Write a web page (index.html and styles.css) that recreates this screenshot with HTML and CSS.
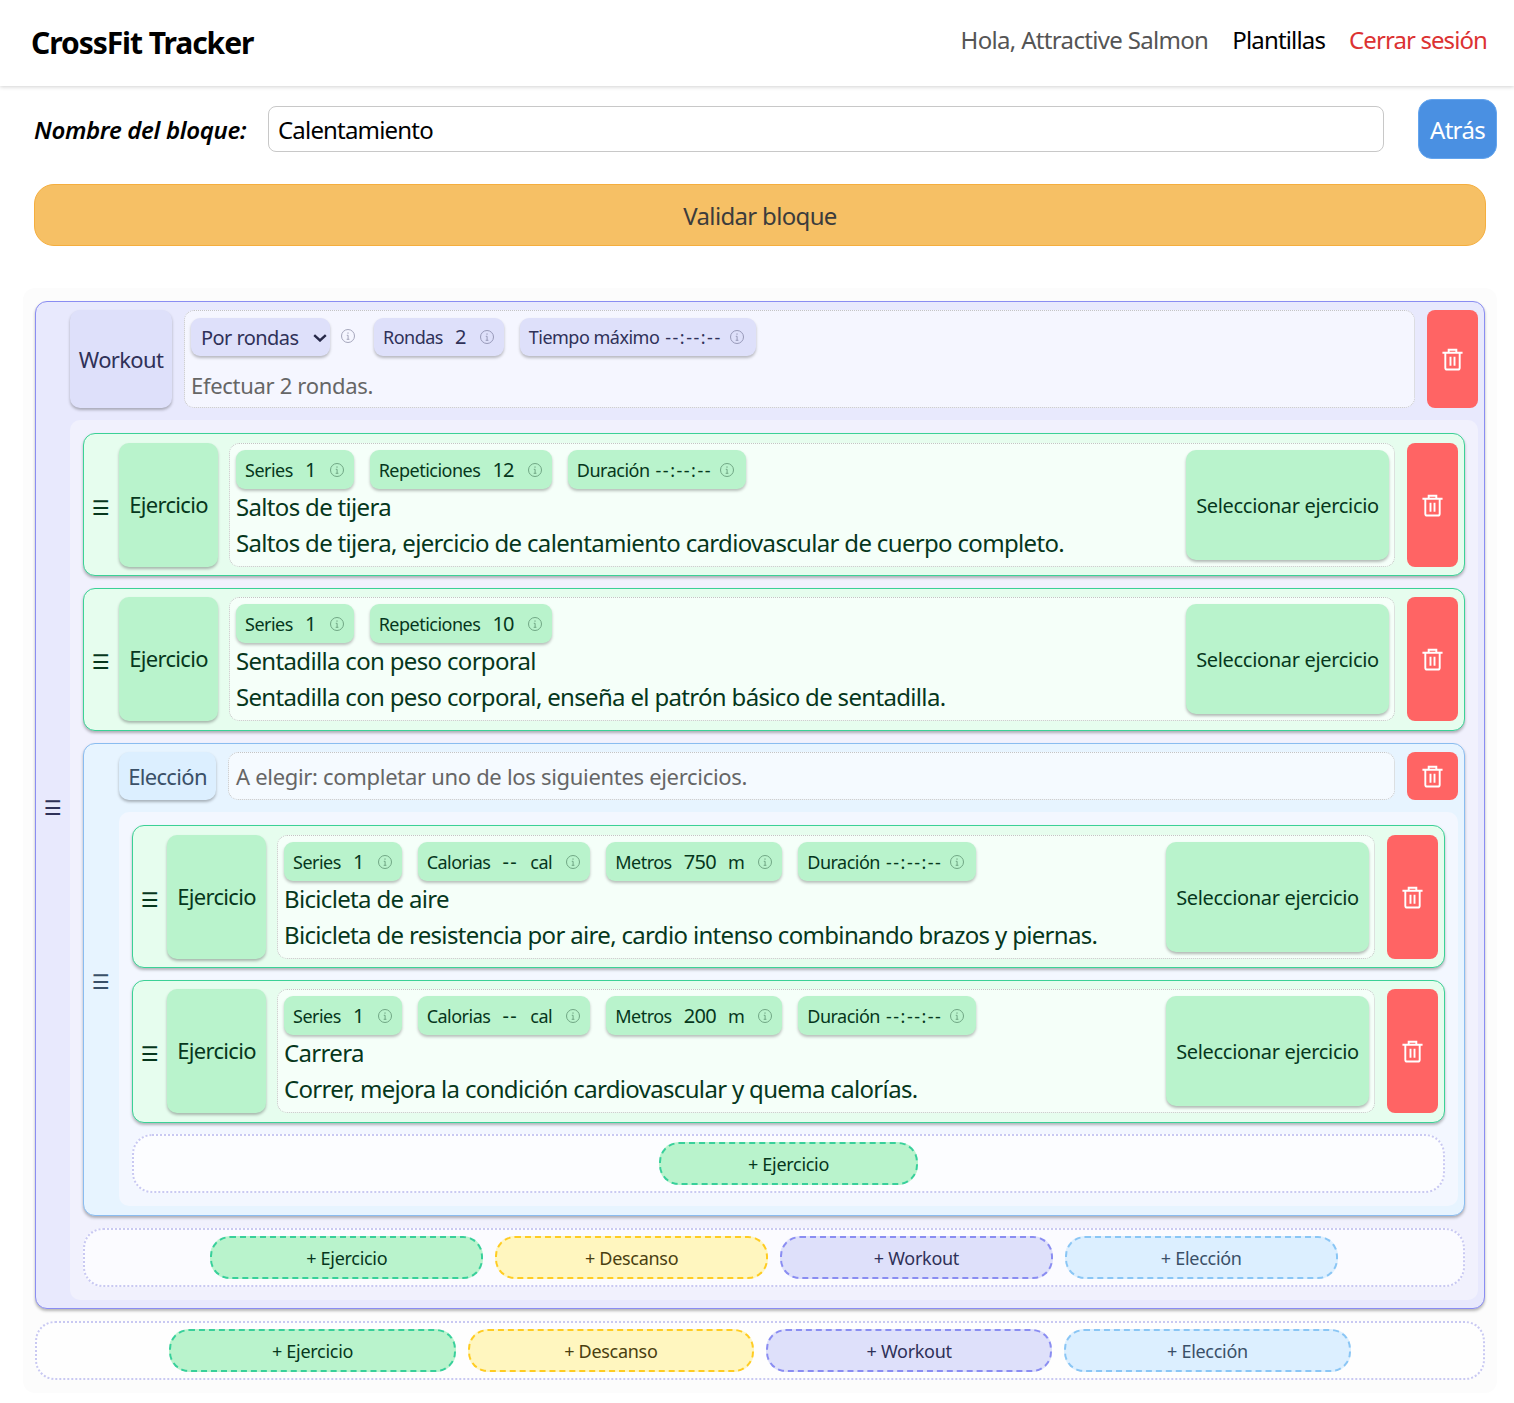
FILE: index.html
```html
<!DOCTYPE html>
<html lang="es">
<head>
<meta charset="utf-8">
<title>CrossFit Tracker</title>
<link rel="stylesheet" href="styles.css">
</head>
<body>
<svg class="defs" width="0" height="0" aria-hidden="true">
  <symbol id="trash" viewBox="0 0 24 24"><path d="M1.500 5h21M8 4.500V1.800h8v2.700M4.500 5v15.500a2 2 0 0 0 2 2h11a2 2 0 0 0 2-2V5M9.900 9v9.500M14.100 9v9.500" fill="none" stroke="currentColor" stroke-width="2"/></symbol>
  <symbol id="info" viewBox="0 0 14 14"><circle cx="7" cy="7" r="6.500" fill="none" stroke="currentColor" stroke-width="1"/><path d="M5.800 6.300h1.300v4M5.700 10.300h2.700M7 3.400v1.400" fill="none" stroke="currentColor" stroke-width="1"/></symbol>
</svg>
<header class="topbar">
  <div class="brand">CrossFit Tracker</div>
  <nav class="nav">
    <span class="nav-user">Hola, Attractive Salmon</span>
    <span class="nav-link">Plantillas</span>
    <span class="nav-out">Cerrar sesión</span>
  </nav>
</header>
<main class="main">
  <div class="name-row">
    <label class="name-label" for="name">Nombre del bloque:</label>
    <input class="name-input" id="name" value="Calentamiento">
    <button class="back">Atrás</button>
  </div>
  <button class="validate">Validar bloque</button>
  <section class="canvas">
    <div class="block workout">
      <div class="handle">☰</div>
      <div class="body">
        <div class="head wk-head">
          <div class="tag">Workout</div>
          <div class="info wk-info">
            <div class="chips">
              <div class="chip mode"><span>Por rondas</span><svg class="chev" viewBox="0 0 14 8"><path d="M1.200 1.200 7 6.500l5.800-5.300" fill="none" stroke="currentColor" stroke-width="2.400"/></svg></div>
              <svg class="i i-mode"><use href="#info"/></svg>
              <div class="chip c-rondas"><span>Rondas</span><b>2</b><svg class="i"><use href="#info"/></svg></div>
              <div class="chip tight"><span>Tiempo máximo</span><b class="time">--:--:--</b><svg class="i"><use href="#info"/></svg></div>
            </div>
            <div class="desc muted wk-desc">Efectuar 2 rondas.</div>
          </div>
          <button class="del"><svg class="trash"><use href="#trash"/></svg></button>
        </div>
        <div class="kids wk-kids">
          <div class="block ex">
            <div class="handle">☰</div>
            <div class="tag">Ejercicio</div>
            <div class="info ex-info">
              <div class="ex-main">
                <div class="chips">
                  <div class="chip"><span>Series</span><b>1</b><svg class="i"><use href="#info"/></svg></div>
                  <div class="chip"><span>Repeticiones</span><b>12</b><svg class="i"><use href="#info"/></svg></div>
                  <div class="chip tight"><span>Duración</span><b class="time">--:--:--</b><svg class="i"><use href="#info"/></svg></div>
                </div>
                <div class="desc">Saltos de tijera</div>
                <div class="desc">Saltos de tijera, ejercicio de calentamiento cardiovascular de cuerpo completo.</div>
              </div>
              <button class="pick">Seleccionar ejercicio</button>
            </div>
            <button class="del"><svg class="trash"><use href="#trash"/></svg></button>
          </div>
          <div class="block ex">
            <div class="handle">☰</div>
            <div class="tag">Ejercicio</div>
            <div class="info ex-info">
              <div class="ex-main">
                <div class="chips">
                  <div class="chip"><span>Series</span><b>1</b><svg class="i"><use href="#info"/></svg></div>
                  <div class="chip"><span>Repeticiones</span><b>10</b><svg class="i"><use href="#info"/></svg></div>
                </div>
                <div class="desc">Sentadilla con peso corporal</div>
                <div class="desc">Sentadilla con peso corporal, enseña el patrón básico de sentadilla.</div>
              </div>
              <button class="pick">Seleccionar ejercicio</button>
            </div>
            <button class="del"><svg class="trash"><use href="#trash"/></svg></button>
          </div>
          <div class="block choice">
            <div class="handle">☰</div>
            <div class="body">
              <div class="head ch-head">
                <div class="tag">Elección</div>
                <div class="info ch-info"><div class="desc muted">A elegir: completar uno de los siguientes ejercicios.</div></div>
                <button class="del"><svg class="trash"><use href="#trash"/></svg></button>
              </div>
              <div class="kids ch-kids">
                <div class="block ex">
                  <div class="handle">☰</div>
                  <div class="tag">Ejercicio</div>
                  <div class="info ex-info">
                    <div class="ex-main">
                      <div class="chips">
                        <div class="chip"><span>Series</span><b>1</b><svg class="i"><use href="#info"/></svg></div>
                        <div class="chip"><span>Calorias</span><b class="dash">--</b><span>cal</span><svg class="i"><use href="#info"/></svg></div>
                        <div class="chip"><span>Metros</span><b>750</b><span>m</span><svg class="i"><use href="#info"/></svg></div>
                        <div class="chip tight"><span>Duración</span><b class="time">--:--:--</b><svg class="i"><use href="#info"/></svg></div>
                      </div>
                      <div class="desc">Bicicleta de aire</div>
                      <div class="desc">Bicicleta de resistencia por aire, cardio intenso combinando brazos y piernas.</div>
                    </div>
                    <button class="pick">Seleccionar ejercicio</button>
                  </div>
                  <button class="del"><svg class="trash"><use href="#trash"/></svg></button>
                </div>
                <div class="block ex">
                  <div class="handle">☰</div>
                  <div class="tag">Ejercicio</div>
                  <div class="info ex-info">
                    <div class="ex-main">
                      <div class="chips">
                        <div class="chip"><span>Series</span><b>1</b><svg class="i"><use href="#info"/></svg></div>
                        <div class="chip"><span>Calorias</span><b class="dash">--</b><span>cal</span><svg class="i"><use href="#info"/></svg></div>
                        <div class="chip"><span>Metros</span><b>200</b><span>m</span><svg class="i"><use href="#info"/></svg></div>
                        <div class="chip tight"><span>Duración</span><b class="time">--:--:--</b><svg class="i"><use href="#info"/></svg></div>
                      </div>
                      <div class="desc">Carrera</div>
                      <div class="desc">Correr, mejora la condición cardiovascular y quema calorías.</div>
                    </div>
                    <button class="pick">Seleccionar ejercicio</button>
                  </div>
                  <button class="del"><svg class="trash"><use href="#trash"/></svg></button>
                </div>
                <div class="zone"><button class="add a-ex">+ Ejercicio</button></div>
              </div>
            </div>
          </div>
          <div class="zone">
            <button class="add a-ex">+ Ejercicio</button>
            <button class="add a-rest">+ Descanso</button>
            <button class="add a-wk">+ Workout</button>
            <button class="add a-ch">+ Elección</button>
          </div>
        </div>
      </div>
    </div>
    <div class="zone">
      <button class="add a-ex">+ Ejercicio</button>
      <button class="add a-rest">+ Descanso</button>
      <button class="add a-wk">+ Workout</button>
      <button class="add a-ch">+ Elección</button>
    </div>
  </section>
</main>
</body>
</html>
```
FILE: styles.css
```css
* { box-sizing: border-box; }
html, body { margin: 0; padding: 0; }
body {
  background: #fff;
  color: #000;
  font-family: "Noto Sans", "Open Sans", sans-serif;
  font-size: 24px;
  letter-spacing: -0.028em;
}
button, input { font: inherit; letter-spacing: inherit; }
.defs { display: block; height: 0; }

.topbar {
  height: 86px;
  display: flex;
  align-items: center;
  justify-content: space-between;
  padding: 0 27px 0 31px;
  box-shadow: 0 1px 4px rgba(0,0,0,.18);
}
.brand { font-size: 30px; font-weight: 700; letter-spacing: -0.035em; padding-bottom: 2px; }
.nav { display: flex; gap: 24px; padding-bottom: 8px; }
.nav-user { color: #555; }
.nav-link { letter-spacing: -0.035em; }
.nav-out { color: #dc3232; letter-spacing: -0.038em; }

.main { padding: 13px 17px 10px 23px; }
.name-row { display: flex; align-items: center; padding-left: 11px; }
.name-label { width: 234px; font-style: italic; font-weight: 600; letter-spacing: -0.014em; }
.name-input {
  width: 1116px;
  height: 46px;
  padding: 0 9px;
  border: 1px solid #c8c8c8;
  border-radius: 8px;
  background: #fff;
  color: #000;
  letter-spacing: -0.034em;
}
.back {
  margin-left: 34px;
  width: 79px;
  height: 60px;
  padding: 0;
  color: #fff;
  background: #4a90e2;
  border: 1px solid #64a5ee;
  border-radius: 14px;
}
.validate {
  display: block;
  width: 1452px;
  height: 62px;
  margin: 25px 0 0 11px;
  background: #f6c065;
  border: 1px solid #f5ae3e;
  border-radius: 20px;
  color: #3c3c3c;
}

.canvas {
  margin-top: 42px;
  padding: 13px 12px 13px;
  background: #fcfcfc;
  border-radius: 12px;
  display: flex;
  flex-direction: column;
  gap: 12px;
}
.block {
  display: flex;
  border: 1px solid;
  border-radius: 12px;
  box-shadow: 0 2px 3px rgba(0,0,0,.28);
}
.body { flex: 1; min-width: 0; display: flex; flex-direction: column; gap: 12px; }
.handle {
  flex: 0 0 35px;
  align-self: center;
  margin-top: 6px;
  padding-right: 1px;
  text-align: center;
  font-family: "DejaVu Sans", sans-serif;
  font-size: 20px;
  font-weight: 700;
  line-height: 1;
  letter-spacing: 0;
}
.workout > .handle { flex-basis: 34px; padding-right: 0; }
.head { display: flex; gap: 12px; }
.tag {
  flex: none;
  display: flex;
  align-items: center;
  justify-content: center;
  font-size: 22px;
  border-radius: 10px;
  box-shadow: 0 2px 3px rgba(0,0,0,.28);
}
.info {
  flex: 1;
  min-width: 0;
  border: 1px dotted #c4c4c4;
  border-radius: 10px;
}
.chips { display: flex; align-items: center; gap: 16px; }
.chip {
  height: 39px;
  display: flex;
  align-items: center;
  gap: 12px;
  padding: 0 10px 0 9px;
  font-size: 18px;
  letter-spacing: -0.028em;
  border-radius: 9px;
  box-shadow: 0 2px 3px rgba(0,0,0,.25);
  white-space: nowrap;
}
.chip b { font-weight: 400; font-size: 20px; letter-spacing: -0.035em; }
.chip .dash { letter-spacing: 1.5px; }
.chip .time { font-size: 18px; letter-spacing: 1.5px; }
.chip .i { margin-left: 2px; }
.chip.tight { gap: 6px; padding-right: 12px; }
.i { flex: none; width: 14px; height: 14px; opacity: .4; }
.desc { height: 36px; line-height: 36px; white-space: nowrap; }
.muted { color: #666; font-size: 22px; letter-spacing: -0.014em; }
.del {
  flex: none;
  width: 51px;
  padding: 0;
  display: flex;
  align-items: center;
  justify-content: center;
  color: #fff;
  background: #ff6464;
  border: 0;
  border-radius: 8px;
}
.trash { width: 23px; height: 23px; }
.kids { display: flex; flex-direction: column; gap: 12px; border-radius: 10px; }

.workout {
  background: #e8e9fd;
  border-color: #8a8df2;
  padding: 8px 6px 8px 0;
  color: #2f3158;
}
.wk-head { height: 98px; }
.workout > .body > .head > .tag { width: 102px; background: #dee0fa; }
.wk-info { background: #f5f6ff; padding: 7px 6px; }
.wk-info .chip { height: 38px; padding-bottom: 1px; }
.wk-info .mode { padding-bottom: 0; }
.mode {
  flex: none;
  width: 139px;
  padding-left: 10px;
  padding-right: 3px;
  justify-content: space-between;
  font-size: 20px;
  letter-spacing: -0.028em;
  color: #2f3158;
}
.chev { flex: none; width: 14px; height: 8px; margin-top: 1px; color: #262848; }
.i-mode { margin: -2px 3px 0 -5px; }
.wk-desc { margin-top: 11px; }
.wk-kids { background: #f1f1fd; padding: 13px; }

.ex {
  background: #e6fdee;
  border-color: #3bd196;
  padding: 9px 6px 8px 0;
  color: #06371c;
}
.ex + .ex { padding-top: 8px; padding-bottom: 9px; }
.ex > .tag { width: 99px; margin-right: 11px; padding-bottom: 3px; background: #b9f3cc; }
.ex-info {
  height: 124px;
  display: flex;
  justify-content: space-between;
  padding: 6px 5px 6px 6px;
  background: #f5fff9;
  margin-right: 12px;
}
.ex .chip { background: #b9f3cc; }
.ex-main { min-width: 0; }
.pick {
  flex: none;
  width: 203px;
  height: 110px;
  padding: 0;
  font-size: 20px;
  letter-spacing: -0.016em;
  color: #06371c;
  background: #b9f3cc;
  border: 0;
  border-radius: 10px;
  box-shadow: 0 2px 3px rgba(0,0,0,.28);
}
.workout .chip { background: #dee0fa; }
.workout .ex .chip { background: #b9f3cc; }

.choice {
  background: #e7f4ff;
  border-color: #8abcf0;
  padding: 8px 6px 9px 0;
  color: #3a5068;
}
.ch-head { height: 48px; }
.choice > .body > .head > .tag { width: 97px; background: #dcefff; }
.ch-info { background: #f5faff; padding: 0 7px; display: flex; align-items: center; }
.ch-kids { background: #f3f7ff; padding: 13px; border-radius: 10px; }
.ch-kids .handle { flex-basis: 34px; padding-right: 0; }
.ch-kids .zone { margin-top: -1px; }

.zone {
  display: flex;
  justify-content: center;
  gap: 12px;
  height: 59px;
  padding-top: 6px;
  background: rgba(255,255,255,.7);
  border: 2px dotted #c9c9f2;
  border-radius: 20px;
}
.add {
  width: 19.8%;
  height: 43px;
  padding: 0;
  font-size: 18px;
  letter-spacing: -0.016em;
  border: 2px dashed;
  border-radius: 20px;
}
.a-ex { background: #b9f3cc; border-color: #38d09a; color: #06371c; }
.a-rest { background: #fff6bf; border-color: #ffcc22; color: #4a3f10; }
.a-wk { background: #dee0fa; border-color: #8a8df2; color: #2f3158; }
.a-ch { background: #dcefff; border-color: #8ac6f5; color: #3a5068; }
```
